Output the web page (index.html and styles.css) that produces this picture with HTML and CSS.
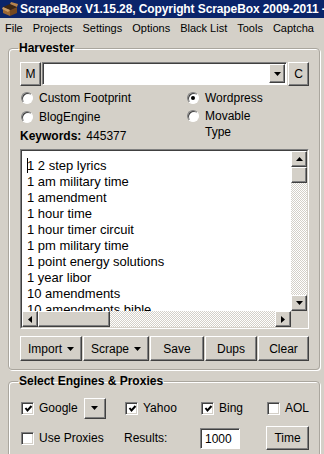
FILE: index.html
```html
<!DOCTYPE html>
<html lang="en">
<head>
    <meta charset="UTF-8">
    <title>ScrapeBox</title>
    <link rel="stylesheet" href="styles.css">
</head>
<body>
    <div class="titlebar">
        <svg class="app-icon" width="16" height="16" viewBox="0 0 16 16">
            <polygon points="1,6 8,9 8,15 1,12" fill="#9a6634"/>
            <polygon points="8,9 15,6 15,12 8,15" fill="#74481f"/>
            <polygon points="1,6 8,3 15,6 8,9" fill="#3d2611"/>
            <polygon points="1,6 8,9 6,11 0,8" fill="#c99a62"/>
            <polygon points="8,3 15,6 16,3 9,1" fill="#b8844c"/>
        </svg>
        <span class="title-text">ScrapeBox V1.15.28, Copyright ScrapeBox 2009-2011 -</span>
    </div>

    <div class="menubar">
        <span>File</span>
        <span>Projects</span>
        <span>Settings</span>
        <span>Options</span>
        <span>Black List</span>
        <span>Tools</span>
        <span>Captcha</span>
    </div>

    <fieldset class="group harvester">
        <legend>Harvester</legend>

        <div class="search-row">
            <button class="btn square">M</button>
            <div class="combo">
                <div class="combo-field"></div>
                <span class="btn combo-arrow">
                    <svg width="7" height="4" viewBox="0 0 7 4"><polygon points="0,0 7,0 3.5,4"/></svg>
                </span>
            </div>
            <button class="btn square">C</button>
        </div>

        <div class="platforms">
            <div class="platform-col left">
                <label class="radio"><span class="radio-dot"></span>Custom Footprint</label>
                <label class="radio"><span class="radio-dot"></span>BlogEngine</label>
                <div class="keyword-count"><b>Keywords:</b><span class="count">445377</span></div>
            </div>
            <div class="platform-col">
                <label class="radio"><span class="radio-dot checked"></span>Wordpress</label>
                <label class="radio multi"><span class="radio-dot"></span><span>Movable<br>Type</span></label>
            </div>
        </div>

        <div class="keyword-box">
            <div class="keyword-inner">
                <div class="keyword-list">
                    <div><span class="caret"></span>1 2 step lyrics</div>
                    <div>1 am military time</div>
                    <div>1 amendment</div>
                    <div>1 hour time</div>
                    <div>1 hour timer circuit</div>
                    <div>1 pm military time</div>
                    <div>1 point energy solutions</div>
                    <div>1 year libor</div>
                    <div>10 amendments</div>
                    <div>10 amendments bible</div>
                </div>
                <div class="vscroll">
                    <span class="btn sb-btn"><svg width="7" height="4" viewBox="0 0 7 4"><polygon points="0,4 7,4 3.5,0"/></svg></span>
                    <span class="btn sb-thumb"></span>
                    <span class="sb-track"></span>
                    <span class="btn sb-btn"><svg width="7" height="4" viewBox="0 0 7 4"><polygon points="0,0 7,0 3.5,4"/></svg></span>
                </div>
                <div class="hscroll">
                    <span class="btn sb-btn"><svg width="4" height="7" viewBox="0 0 4 7"><polygon points="4,0 4,7 0,3.5"/></svg></span>
                    <span class="btn sb-thumb wide"></span>
                    <span class="sb-track"></span>
                    <span class="btn sb-btn"><svg width="4" height="7" viewBox="0 0 4 7"><polygon points="0,0 0,7 4,3.5"/></svg></span>
                </div>
                <div class="sb-corner"></div>
            </div>
        </div>

        <div class="actions">
            <button class="btn import">Import <svg width="7" height="4" viewBox="0 0 7 4"><polygon points="0,0 7,0 3.5,4"/></svg></button>
            <button class="btn scrape">Scrape <svg width="7" height="4" viewBox="0 0 7 4"><polygon points="0,0 7,0 3.5,4"/></svg></button>
            <button class="btn save">Save</button>
            <button class="btn dups">Dups</button>
            <button class="btn clear">Clear</button>
        </div>
    </fieldset>

    <fieldset class="group engines">
        <legend>Select Engines &amp; Proxies</legend>

        <div class="engine-grid">
            <div class="cell">
                <label class="check"><span class="check-box on"><svg width="9" height="9" viewBox="0 0 9 9"><polyline points="1.5,4 3.5,6.5 7.5,2" fill="none" stroke="#000" stroke-width="2"/></svg></span>Google</label>
                <span class="btn engine-drop"><svg width="7" height="4" viewBox="0 0 7 4"><polygon points="0,0 7,0 3.5,4"/></svg></span>
            </div>
            <div class="cell">
                <label class="check"><span class="check-box on"><svg width="9" height="9" viewBox="0 0 9 9"><polyline points="1.5,4 3.5,6.5 7.5,2" fill="none" stroke="#000" stroke-width="2"/></svg></span>Yahoo</label>
            </div>
            <div class="cell">
                <label class="check"><span class="check-box on"><svg width="9" height="9" viewBox="0 0 9 9"><polyline points="1.5,4 3.5,6.5 7.5,2" fill="none" stroke="#000" stroke-width="2"/></svg></span>Bing</label>
            </div>
            <div class="cell">
                <label class="check"><span class="check-box"></span>AOL</label>
            </div>

            <div class="cell tall">
                <label class="check"><span class="check-box"></span>Use Proxies</label>
            </div>
            <div class="cell tall">Results:</div>
            <div class="cell tall"><span class="results-input">1000</span></div>
            <div class="cell tall"><button class="btn time">Time</button></div>
        </div>
    </fieldset>
</body>
</html>
```

FILE: styles.css
```css
body {
    margin: 0;
    width: 324px;
    height: 454px;
    overflow: hidden;
    background-color: #d4d0c8;
    font-family: "Liberation Sans", Arial, sans-serif;
    font-size: 12px;
    color: #000;
}

/* title + menu */
.titlebar {
    height: 18px;
    background-color: #0a246a;
    display: flex;
    align-items: center;
    white-space: nowrap;
    overflow: hidden;
}

.app-icon {
    flex: none;
    margin: 0 2px 0 2px;
}

.title-text {
    color: #fff;
    font-weight: bold;
    font-size: 12px;
    letter-spacing: -0.1px;
}

.menubar {
    height: 19px;
    display: flex;
    align-items: center;
    font-size: 11px;
}

.menubar span {
    padding: 0 5px;
}

/* group boxes */
.group {
    margin: 4px 4px 0 8px;
    padding: 0 10px 8px 11px;
    border: 1px solid #aaa69e;
    border-radius: 4px;
    box-shadow: inset 1px 1px 0 #fff, 1px 1px 0 #fff;
}

.group legend {
    font-weight: bold;
    font-size: 12px;
    line-height: 15px;
    padding: 0 1px;
    margin-left: -2px;
}

/* 3d buttons */
.btn {
    box-sizing: border-box;
    background-color: #d4d0c8;
    border: 1px solid;
    border-color: #fff #404040 #404040 #fff;
    box-shadow: inset -1px -1px 0 #808080;
    font-family: "Liberation Sans", Arial, sans-serif;
    font-size: 12px;
    color: #000;
    padding: 0;
    display: flex;
    align-items: center;
    justify-content: center;
    gap: 5px;
}

.btn svg {
    fill: #000;
}

.search-row {
    display: flex;
    gap: 1px;
    height: 24px;
    margin-top: 6px;
}

.square {
    width: 21px;
    height: 24px;
    flex: none;
}

.combo {
    flex: 1;
    height: 23px;
    box-sizing: border-box;
    background-color: #fff;
    border: 1px solid;
    border-color: #808080 #fff #fff #808080;
    display: flex;
    padding: 1px;
    box-shadow: inset 1px 1px 0 #404040;
}

.combo-field {
    flex: 1;
}

.combo-arrow {
    width: 16px;
    height: 19px;
}

/* platform radios */
.platforms {
    display: flex;
    margin-top: 2px;
}

.platform-col {
    display: flex;
    flex-direction: column;
}

.platform-col.left {
    width: 166px;
}

.radio {
    display: flex;
    align-items: center;
    height: 19px;
    margin-left: 1px;
}

.radio.multi {
    align-items: flex-start;
    height: auto;
    line-height: 16px;
    margin-top: 1px;
}

.radio.multi .radio-dot {
    margin-top: 2px;
}

.radio-dot {
    box-sizing: border-box;
    width: 12px;
    height: 12px;
    border-radius: 50%;
    background-color: #fff;
    border: 1px solid;
    border-color: #808080 #fff #fff #808080;
    box-shadow: inset 1px 1px 0 #404040;
    margin-right: 6px;
    flex: none;
    position: relative;
}

.radio-dot.checked::after {
    content: "";
    position: absolute;
    left: 3px;
    top: 3px;
    width: 4px;
    height: 4px;
    border-radius: 50%;
    background-color: #000;
}

.keyword-count {
    height: 19px;
    display: flex;
    align-items: center;
}

.keyword-count .count {
    margin-left: 5px;
}

/* keyword memo */
.keyword-box {
    margin-top: 4px;
    height: 180px;
    box-sizing: border-box;
    border: 1px solid;
    border-color: #808080 #fff #fff #808080;
}

.keyword-inner {
    height: 100%;
    box-sizing: border-box;
    border: 1px solid;
    border-color: #404040 #d4d0c8 #d4d0c8 #404040;
    background-color: #fff;
    display: grid;
    grid-template-columns: 1fr 16px;
    grid-template-rows: 1fr 16px;
}

.keyword-list {
    overflow: hidden;
    padding: 7px 0 0 5px;
    font-size: 13px;
    line-height: 16px;
    white-space: nowrap;
}

.caret {
    display: inline-block;
    width: 0;
    height: 15px;
    border-left: 1px solid #000;
    margin-right: -1px;
    vertical-align: -3px;
}

.vscroll, .hscroll {
    display: flex;
    background: repeating-conic-gradient(#fff 0 25%, #d4d0c8 0 50%) 0 0 / 2px 2px;
}

.vscroll {
    flex-direction: column;
}

.sb-btn, .sb-thumb {
    width: 16px;
    height: 16px;
    flex: none;
}

.sb-thumb.wide {
    width: 72px;
}

.sb-track {
    flex: 1;
}

.sb-corner {
    background-color: #d4d0c8;
}

/* action buttons */
.actions {
    display: flex;
    gap: 1px;
    margin-top: 7px;
    height: 25px;
}

.actions .btn {
    height: 25px;
}

.import { width: 62px; }
.scrape { width: 66px; }
.save { width: 54px; }
.dups { width: 52px; }
.clear { flex: 1; }

/* engines */
.engines {
    padding-bottom: 20px;
}

.engine-grid {
    display: grid;
    grid-template-columns: 104px 76px 66px 1fr;
    grid-template-rows: 22px 24px;
    row-gap: 7px;
    margin-top: 8px;
}

.cell {
    display: flex;
    align-items: center;
}

.check {
    display: flex;
    align-items: center;
    margin-left: 1px;
}

.check-box {
    box-sizing: border-box;
    width: 13px;
    height: 13px;
    background-color: #fff;
    border: 1px solid;
    border-color: #808080 #fff #fff #808080;
    box-shadow: inset 1px 1px 0 #404040, inset -1px -1px 0 #d4d0c8;
    margin-right: 5px;
    display: flex;
    align-items: center;
    justify-content: center;
}

.check-box svg {
    margin: 1px 0 0 1px;
}

.engine-drop {
    width: 22px;
    height: 21px;
    margin-left: 6px;
}

.results-input {
    box-sizing: border-box;
    width: 40px;
    height: 21px;
    background-color: #fff;
    border: 1px solid;
    border-color: #808080 #fff #fff #808080;
    box-shadow: inset 1px 1px 0 #404040;
    padding: 2px 0 0 4px;
    font-size: 12px;
    line-height: 16px;
}

.time {
    width: 43px;
    height: 24px;
}
```
